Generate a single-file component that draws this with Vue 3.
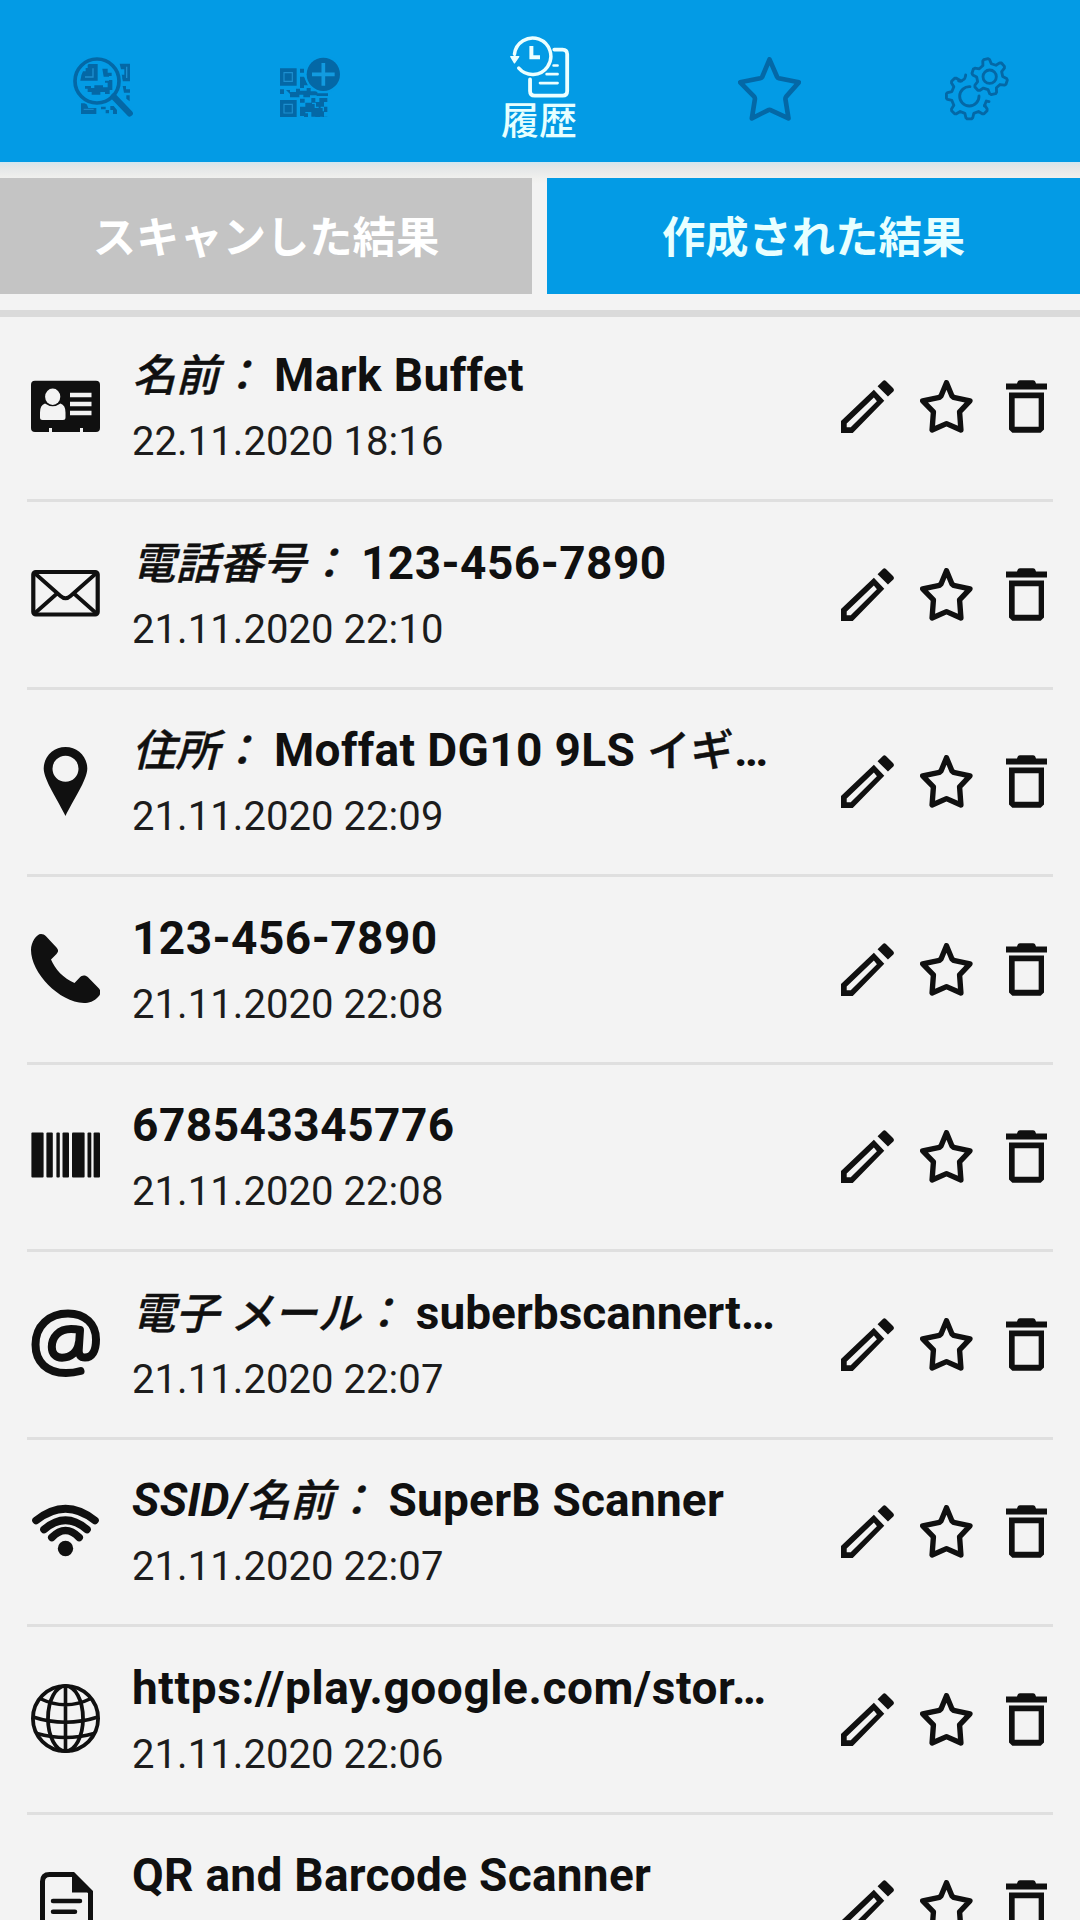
<script setup>
const rows = [
  { icon: 'card', label: '名前：', title: 'Mark Buffet', date: '22.11.2020 18:16', track: 0.4 },
  { icon: 'mail', label: '電話番号：', title: '123-456-7890', date: '21.11.2020 22:10', track: 0.45 },
  { icon: 'pin', label: '住所：', title: 'Moffat DG10 9LS イギ…', date: '21.11.2020 22:09', track: 0.35 },
  { icon: 'phone', label: '', title: '123-456-7890', date: '21.11.2020 22:08', track: 0.45 },
  { icon: 'barcode', label: '', title: '678543345776', date: '21.11.2020 22:08', track: 0.5 },
  { icon: 'at', label: '電子 メール：', title: 'suberbscannert…', date: '21.11.2020 22:07', track: 0 },
  { icon: 'wifi', label: 'SSID/名前：', title: 'SuperB Scanner', date: '21.11.2020 22:07', track: 0.2 },
  { icon: 'globe', label: '', title: 'https://play.google.com/stor…', date: '21.11.2020 22:06', track: 0.6 },
  { icon: 'doc', label: '', title: 'QR and Barcode Scanner', date: '', track: 0.28 },
]

// Splits a text into Latin and Japanese runs, which are set at different sizes.
function runs(text) {
  return (text.match(/[\u3000-\u9fff\uff00-\uffef]+|[^\u3000-\u9fff\uff00-\uffef]+/g) || []).map((t) => ({
    t,
    cjk: /[\u3000-\u9fff\uff00-\uffef]/.test(t),
  }))
}

const bars = [[0.4, 12.2], [15.4, 6.4], [25.4, 3.4], [31.5, 6.5], [41, 12.6], [56.5, 3.8], [62.6, 6.4]]

// Outline of a cog: each tooth is a raised step around its centre angle.
function gear(cx, cy, inner, outer, teeth, from, count, closed) {
  const step = 360 / teeth
  const pts = []
  for (let i = 0; i < count; i++) {
    const a = from + i * step
    for (const [d, r] of [[-0.32, inner], [-0.2, outer - 3], [-0.12, outer], [0.12, outer], [0.2, outer - 3], [0.32, inner]]) {
      const t = ((a + d * step) * Math.PI) / 180
      pts.push(`${(cx + r * Math.cos(t)).toFixed(1)} ${(cy + r * Math.sin(t)).toFixed(1)}`)
    }
  }
  return 'M' + pts.join('L') + (closed ? 'Z' : '')
}
const bigGear = gear(745, 165, 54, 69, 8, 45, 5, false)
const smallGear = gear(806, 107, 39, 54, 6, -102, 6, true)
</script>

<template>
  <div class="screen">
    <header class="bar">
      <div class="nav side">
        <svg width="60" height="60" viewBox="68 83 180 180">
          <g fill="#0468a6">
            <path d="M112 104h30v50H90q2-18 8-28h8v-10h6zM156 118h16v12h12v10h-8v12h10v30h-8v12h-14v-6h-14v8h-26v-8h-12v-10h-8v-8h18v6h10v-8h26v6h14v-14h-8v-6h12v-12h-16z" />
            <path d="M208 103h31v53h-22l-5-20h10v-16h-10z" />
            <path d="M217 170h10v10h12v10h-18zM228 198h10v18l-10-8zM92 222h16l6 14h24v18H92zM152 232h14v8h-14zM166 242h10v10h-10zM180 230h10l10 12v12h-12v-12h-8z" />
          </g>
          <path d="M104 143h24v-26M229 112v34" fill="none" stroke="#1d8fd0" stroke-width="4" />
          <path d="M100 240h30" fill="none" stroke="#1d8fd0" stroke-width="3" />
          <circle cx="140" cy="155" r="58.500" fill="none" stroke="#039be5" stroke-width="5" />
          <circle cx="140" cy="155" r="74" fill="none" stroke="#039be5" stroke-width="5" />
          <circle cx="140" cy="155" r="66" fill="none" stroke="#0468a6" stroke-width="11" />
          <path d="M194 206l44 46" stroke="#039be5" stroke-width="28" />
          <path d="M190 202l48 50" stroke="#0468a6" stroke-width="19" stroke-linecap="round" />
        </svg>
      </div>
      <div class="nav inner-l">
        <svg width="60" height="60" viewBox="690 83 180 180">
          <g fill="#0468a6">
            <path d="M690 117h50v52h-50zM690 212h50v52h-50z" />
            <path d="M750 118h12v12h-12zM750 142h12l12 26h-12v8h-12zM690 180h12v14h-12zM708 182h12v6h18v-10h12v6h20v-8h12v10h20v12h-22v6h-20v-8h-12v8h-28v-10z" />
            <path d="M750 208h14v12h-14zM750 232h16v-12h18v-14h12v12h12v-12h24v12h-10v14h10v16h-10v14h10v12h-14v-12h-8v12h-14v-12h-12v-14h-18v12h-16zM762 252h12v12h-12zM800 192h34v8h-34z" />
          </g>
          <path d="M702 130h25v26h-25zM702 225h25v26h-25z" fill="none" stroke="#1d8fd0" stroke-width="3.500" />
          <path d="M786 222h10v12h10M812 234h8v12" fill="none" stroke="#039be5" stroke-width="4" />
          <circle cx="820" cy="135" r="56" fill="#039be5" />
          <circle cx="820" cy="135" r="50" fill="#0468a6" />
          <path d="M820 101v68M786 135h68" stroke="#129be0" stroke-width="11" />
        </svg>
      </div>
      <div class="nav active">
        <svg width="61" height="63" viewBox="85 45 183 190" fill="none" stroke="#ecffff" stroke-linecap="round">
          <path d="M101 103A55 55 0 1 1 114 145" stroke-width="10.500" />
          <path d="M90 110h24l-13 19z" fill="#ecffff" stroke-width="4" stroke-linejoin="round" />
          <path d="M152 78v34h26" stroke-width="12" stroke-linecap="butt" />
          <path d="M221 89h25q14 0 14 14v111q0 14-14 14h-84q-14 0-14-14v-35" stroke-width="11.500" />
          <path d="M219 137h12M198 163h33M178 190h53" stroke-width="8" />
        </svg>
        <span>履歴</span>
      </div>
      <div class="nav inner-r">
        <svg width="63" height="64" viewBox="53 48 188 192">
          <path d="M147 55L170 108Q171 111 175 112L235 124L197 167Q194 171 195 176L204 232L152 208Q147 205 142 208L94 232L103 176Q104 171 101 167L59 124L119 112Q123 111 125 108Z" fill="none" stroke="#0468a6" stroke-width="14" stroke-linejoin="round" />
        </svg>
      </div>
      <div class="nav side">
        <svg width="64" height="64" viewBox="672 48 192 192" fill="none" stroke="#0468a6" stroke-width="8.500" stroke-linecap="round" stroke-linejoin="round">
          <path :d="bigGear" />
          <path d="M713 120q8 3 12-3 8-2 9-15M790 195l6-15 8 2" />
          <path d="M747 137a29 29 0 1 0 27 28" />
          <path :d="smallGear" />
          <circle cx="806" cy="107" r="20" />
        </svg>
      </div>
    </header>

    <div class="tabs">
      <div class="tab off">スキャンした結果</div>
      <div class="tab on">作成された結果</div>
    </div>

    <main class="list">
      <section v-for="(r, i) in rows" :key="i" class="row">
        <svg class="kind" width="69" height="69" viewBox="0 0 69 69" fill="#101010">
          <template v-if="r.icon === 'card'">
            <path d="M4 8.700h61q4 0 4 4V56q0 4-4 4H52v-4h-3v4H21v-4h-3v4H4q-4 0-4-4V12.700q0-4 4-4z" />
            <g fill="#f3f3f3">
              <ellipse cx="21.700" cy="24.800" rx="7.600" ry="8.200" />
              <path d="M14 31.500q7.700 5.500 15.500 0q5 1.500 5 9v5q0 2.500-2.500 2.500H11.500Q9 48 9 45.500v-5q0-7.500 5-9z" />
              <path d="M39 20.700h21.500v4.500H39zM39 29.700h21.500v4.500H39zM39 38.800h21.500v4.500H39z" />
            </g>
          </template>
          <g v-else-if="r.icon === 'mail'" fill="none" stroke="#101010" stroke-width="4.200" stroke-linejoin="round">
            <rect x="2.300" y="13" width="64.400" height="42.500" rx="2.500" />
            <path d="M3.500 14L29.500 37Q34.500 41.500 39.500 37L65.500 14M3.500 54.500L25.500 35M65.500 54.500L43.500 35" stroke-width="3.800" />
          </g>
          <path v-else-if="r.icon === 'pin'" fill-rule="evenodd" d="M34.500 0C46.500 0 56.300 9.500 56.300 21.500C56.300 33 41 55 34.500 69C28 55 12.700 33 12.700 21.500C12.700 9.500 22.500 0 34.500 0ZM34.500 8.700a13 13 0 1 0 0 26a13 13 0 1 0 0-26z" />
          <path v-else-if="r.icon === 'phone'" d="M10 0C12 0 13.500 .8 15 2.300L25.500 13.500C27.700 16 27.500 18 25.500 20L20 25.500C24 35 32.500 44.500 43.500 49L48.500 43.700C51 41 54.500 41 57 43.300L67.500 54C70 56.500 70 60 67.500 62.500C63 67.500 58 69 53 69C28 68 0 39 0 16C0 8 5.500 0 10 0Z" />
          <template v-else-if="r.icon === 'barcode'">
            <rect v-for="b in bars" :key="b[0]" :x="b[0]" y="10.500" :width="b[1]" height="45" rx="1" />
          </template>
          <g v-else-if="r.icon === 'at'" fill="none" stroke="#101010" stroke-width="8" stroke-linecap="round" stroke-linejoin="round">
            <path d="M49.500 62C45 63.300 40 64 35 64C16 64 4.500 53 4.500 35.500C4.500 17 18 4.500 37 4.500C54 4.500 65 15 65 30.500C65 42 61 48.500 54 48.500C49.500 48.500 47.500 45.500 47.700 41L49 21C46 20.300 43 20 40 20C28 20 20.800 28 20.800 38C20.800 45 25 48.700 31 48.700C39.500 48.700 46.800 43 47.800 34" />
          </g>
          <g v-else-if="r.icon === 'wifi'">
            <path d="M5 23.500Q34.500 0 64 23.500M13 32.500Q34.500 14 56 32.500M20.800 40.500Q34.500 26.500 48.200 40.500" fill="none" stroke="#101010" stroke-width="7.600" stroke-linecap="round" />
            <circle cx="34.500" cy="51.500" r="7.700" />
          </g>
          <g v-else-if="r.icon === 'globe'" fill="none" stroke="#101010" stroke-width="3.800">
            <circle cx="34.500" cy="34.500" r="32.600" />
            <ellipse cx="34.500" cy="34.500" rx="17.500" ry="32.600" />
            <path d="M34.500 2v65M9 14.500Q34.500 27 60 14.500M2 33Q34.500 43.500 67 33M6 49.500Q34.500 57.500 63 49.500" stroke-width="3.600" />
          </g>
          <g v-else>
            <path d="M34 2.500H18.500Q11.500 2.500 11.500 9.500V59.500Q11.500 66.500 18.500 66.500H52.500Q59.500 66.500 59.500 59.500V20L42 2.500Z" fill="none" stroke="#101010" stroke-width="5" />
            <path d="M41 2V20.500H61L43 2Z" />
            <path d="M22 29H49M22 39.700H44M22 50.500H49" stroke="#101010" stroke-width="4.500" stroke-linecap="round" />
          </g>
        </svg>

        <div class="text">
          <div class="title" :style="{ letterSpacing: r.track + 'px' }">
            <em v-if="r.label"><span v-for="(p, k) in runs(r.label)" :key="k" :class="{ cjk: p.cjk }">{{ p.t }}</span></em>
            <b><span v-for="(p, k) in runs(r.title)" :key="k" :class="{ cjk: p.cjk }">{{ p.t }}</span></b>
          </div>
          <div v-if="r.date" class="date">{{ r.date }}</div>
        </div>

        <div class="actions">
          <svg width="53" height="53" viewBox="123 122 158 158" fill="#101010">
            <path fill-rule="evenodd" d="M221 151L252 184L158 280H123V244ZM221 174L140 252V263H152L230 185Z" />
            <path d="M232 141L248 125Q252 120 257 125L278 146Q283 151 279 156L263 171Z" />
          </svg>
          <svg width="53" height="53" viewBox="362 122 158 158">
            <path d="M441 130L457 169L462 174L511 184L480 217L484 271L441 252L398 271L402 217L370 184L420 174L425 169Z" fill="none" stroke="#101010" stroke-width="16" stroke-linejoin="round" />
          </svg>
          <svg width="41" height="53" viewBox="618 122 123 158" fill="#101010">
            <path d="M618 132H651Q653 122 660 122H699Q706 122 708 132H741V150H618Z" />
            <path fill-rule="evenodd" d="M627 159H732V270L722 280H637L627 270ZM644 176V262H716V176Z" />
          </svg>
        </div>
      </section>
    </main>
  </div>
</template>

<style>
body {
  background: #f3f3f3;
  overflow: hidden;
}
</style>

<style scoped>
.screen {
  width: 1080px;
  height: 1920px;
  overflow: hidden;
  background: #f3f3f3;
  color: #101010;
  font-family: Roboto, "Noto Sans CJK JP", sans-serif;
}
svg {
  display: block;
  flex: none;
}
.bar {
  display: flex;
  height: 162px;
  background: #039be5;
}
.nav {
  display: flex;
  flex-direction: column;
  align-items: center;
  padding-top: 57px;
  box-sizing: border-box;
}
.side { width: 206px; }
.inner-l { width: 208px; }
.inner-r { width: 210px; }
.active {
  width: 250px;
  padding-top: 35px;
}
.active span {
  margin-top: 1px;
  font-size: 38px;
  line-height: 44px;
  font-weight: 500;
  color: #e6ffff;
}
.tabs {
  display: flex;
  gap: 15px;
  height: 155px;
  padding: 16px 0;
  box-sizing: border-box;
  border-bottom: 7px solid #dadada;
  background: linear-gradient(#d0e6f0 0, #e2e5e6 4px, #f0f0ee 16px, #f3f3f3 22px);
}
.tab {
  height: 116px;
  padding-top: 3px;
  box-sizing: border-box;
  font-size: 43.300px;
  line-height: 115px;
  font-weight: 700;
  text-align: center;
  white-space: nowrap;
}
.off {
  width: 532px;
  background: #c4c4c4;
  color: #fff;
}
.on {
  width: 533px;
  background: #039be5;
  color: #e8ffff;
}
.list {
  margin-top: -2.300px;
  padding: 0 27px;
}
.row {
  display: flex;
  height: 187.500px;
  box-sizing: border-box;
  border-bottom: 3px solid #dfdfdf;
}
.kind {
  margin: 57px 0 0 4px;
}
.text {
  flex: 1;
  margin: 29.700px 0 0 32px;
  white-space: nowrap;
}
.title {
  font-size: 46px;
  line-height: 62px;
  height: 62px;
}
.title em,
.title b {
  font-weight: 700;
}
.title em {
  margin-right: 11.500px;
  font-style: italic;
}
.title .cjk {
  font-size: 43.500px;
  font-weight: 500;
  letter-spacing: 0;
  -webkit-text-stroke: 0.400px #101010;
}
.date {
  margin-top: 12px;
  font-size: 40px;
  line-height: 48px;
  letter-spacing: 0.060px;
  color: #1c1c1c;
}
.actions {
  display: flex;
  align-items: flex-start;
  margin: 65.700px 6px 0 0;
}
.actions svg:nth-child(2) {
  margin: 0 33px 0 26px;
}
</style>
